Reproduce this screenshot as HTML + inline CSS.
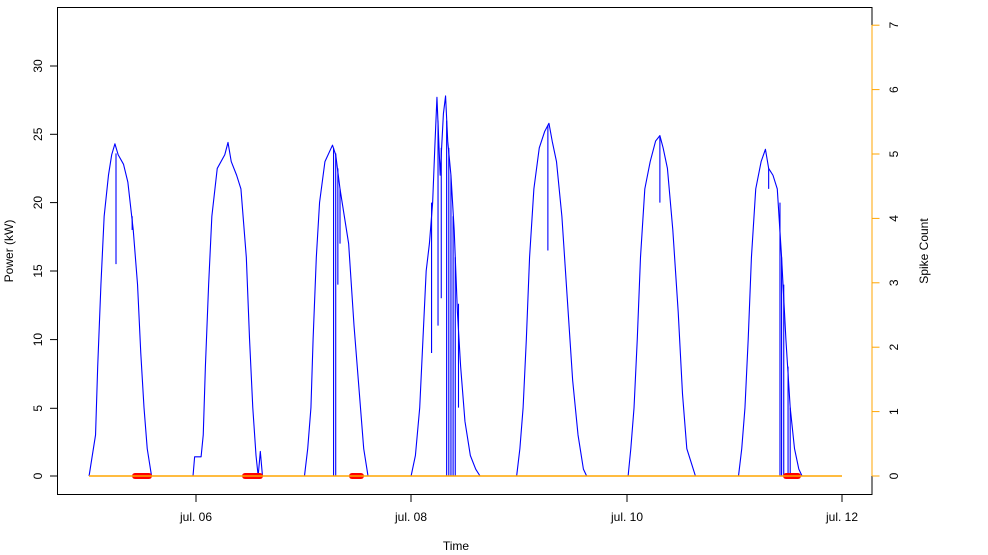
<!DOCTYPE html>
<html><head><meta charset="utf-8"><style>
html,body{margin:0;padding:0;background:#fff;width:988px;height:555px;overflow:hidden}
svg text{font-family:"Liberation Sans",Arial,sans-serif;font-size:12px;fill:#000}
</style></head><body>
<svg width="988" height="555" viewBox="0 0 988 555" xmlns="http://www.w3.org/2000/svg">
<rect x="57.5" y="7.5" width="814.5" height="487" fill="none" stroke="#000" stroke-width="1"/>
<g stroke="#000" stroke-width="1">
<line x1="50" y1="476" x2="57.5" y2="476"/><line x1="50" y1="408.3" x2="57.5" y2="408.3"/>
<line x1="50" y1="339.6" x2="57.5" y2="339.6"/><line x1="50" y1="271" x2="57.5" y2="271"/>
<line x1="50" y1="202.6" x2="57.5" y2="202.6"/><line x1="50" y1="134.3" x2="57.5" y2="134.3"/>
<line x1="50" y1="66" x2="57.5" y2="66"/>
<line x1="196" y1="494.5" x2="196" y2="502"/><line x1="411" y1="494.5" x2="411" y2="502"/>
<line x1="627" y1="494.5" x2="627" y2="502"/><line x1="842" y1="494.5" x2="842" y2="502"/>
</g>
<g text-anchor="middle">
<text transform="translate(42,476) rotate(-90)">0</text>
<text transform="translate(42,408.3) rotate(-90)">5</text>
<text transform="translate(42,339.6) rotate(-90)">10</text>
<text transform="translate(42,271) rotate(-90)">15</text>
<text transform="translate(42,202.6) rotate(-90)">20</text>
<text transform="translate(42,134.3) rotate(-90)">25</text>
<text transform="translate(42,66) rotate(-90)">30</text>
<text transform="translate(13,251) rotate(-90)">Power (kW)</text>
<text x="196" y="521">jul. 06</text><text x="411" y="521">jul. 08</text>
<text x="627" y="521">jul. 10</text><text x="842" y="521">jul. 12</text>
<text x="456" y="550">Time</text>
<text transform="translate(928,251) rotate(-90)">Spike Count</text>
</g>
<g stroke="#FFA500" stroke-width="1">
<line x1="872" y1="25" x2="872" y2="476"/>
<line x1="872" y1="476" x2="879.5" y2="476"/><line x1="872" y1="411.6" x2="879.5" y2="411.6"/>
<line x1="872" y1="347.2" x2="879.5" y2="347.2"/><line x1="872" y1="282.8" x2="879.5" y2="282.8"/>
<line x1="872" y1="218.4" x2="879.5" y2="218.4"/><line x1="872" y1="154" x2="879.5" y2="154"/>
<line x1="872" y1="89.6" x2="879.5" y2="89.6"/><line x1="872" y1="25.2" x2="879.5" y2="25.2"/>
</g>
<g text-anchor="middle">
<text transform="translate(898,476) rotate(-90)">0</text>
<text transform="translate(898,411.6) rotate(-90)">1</text>
<text transform="translate(898,347.2) rotate(-90)">2</text>
<text transform="translate(898,282.8) rotate(-90)">3</text>
<text transform="translate(898,218.4) rotate(-90)">4</text>
<text transform="translate(898,154) rotate(-90)">5</text>
<text transform="translate(898,89.6) rotate(-90)">6</text>
<text transform="translate(898,25.2) rotate(-90)">7</text>
</g>
<g transform="translate(88,476) scale(107.7,-13.67)" fill="none" stroke="#0000FF" stroke-width="1.1" stroke-linejoin="round">
<polyline vector-effect="non-scaling-stroke" points="0.01,0 0.04,1.5 0.07,3 0.09,8 0.12,14 0.15,19 0.19,22 0.22,23.5 0.25,24.3 0.28,23.5 0.33,22.8 0.37,21.5 0.42,18 0.46,14 0.49,9 0.52,5 0.55,2 0.58,0.5 0.59,0"/>
<polyline vector-effect="non-scaling-stroke" points="0.975,0 0.99,1.4 1.05,1.4 1.07,3 1.09,8 1.12,14 1.15,19 1.2,22.5 1.27,23.5 1.30,24.4 1.33,23 1.38,22 1.42,21 1.47,16 1.5,10 1.53,5 1.56,1.5 1.58,0 1.60,1.8 1.62,0"/>
<polyline vector-effect="non-scaling-stroke" points="2.01,0 2.04,2 2.07,5 2.09,10 2.12,16 2.15,20 2.2,23 2.27,24.2 2.3,23.5 2.34,21 2.38,19 2.42,17 2.47,11 2.52,6 2.56,2 2.6,0"/>
<polyline vector-effect="non-scaling-stroke" points="3.0,0 3.04,1.5 3.08,5 3.11,10 3.14,15 3.17,17 3.2,20 3.22,24 3.24,27.7 3.27,22 3.30,26.5 3.32,27.8 3.34,24.5 3.37,22 3.40,18 3.43,12 3.46,8 3.5,4 3.55,1.5 3.6,0.5 3.64,0"/>
<polyline vector-effect="non-scaling-stroke" points="3.98,0 4.01,2 4.04,5 4.07,10 4.1,16 4.14,21 4.19,24 4.24,25.2 4.28,25.8 4.31,24.5 4.35,23 4.4,19 4.45,13 4.5,7 4.55,3 4.6,0.5 4.63,0"/>
<polyline vector-effect="non-scaling-stroke" points="5.015,0 5.04,2 5.07,5 5.1,10 5.13,16 5.17,21 5.22,23 5.27,24.5 5.31,24.9 5.34,24 5.38,22.5 5.43,18 5.48,12 5.52,6 5.56,2 5.6,1 5.64,0"/>
<polyline vector-effect="non-scaling-stroke" points="6.04,0 6.07,2 6.1,5 6.13,10 6.16,16 6.2,21 6.25,23 6.29,23.9 6.32,22.5 6.36,22 6.4,21 6.44,16 6.48,10 6.52,5 6.56,2 6.6,0.5 6.63,0"/>
<path vector-effect="non-scaling-stroke" d="M0.26,23.6V15.5M0.41,19V18M2.28,24V0M2.30,23.6V0M2.32,22.5V14M2.34,21V17M3.19,20V9M3.25,26V11M3.28,24V13M3.33,26V0M3.35,24V0M3.37,22V0M3.39,19V0M3.41,16V0M3.44,12.6V5M4.27,25.6V16.5M5.31,24.9V20M6.32,22.5V21M6.425,20V0M6.44,16V0M6.46,14V0M6.5,8V0M6.52,5V0"/>
</g>
<g stroke="#FF0000" stroke-width="6" stroke-linecap="round">
<line x1="135" y1="476" x2="149" y2="476"/><line x1="245" y1="476" x2="260" y2="476"/>
<line x1="352" y1="476" x2="361" y2="476"/><line x1="786" y1="476" x2="798" y2="476"/>
</g>
<line x1="89" y1="476" x2="842" y2="476" stroke="#FFA500" stroke-width="1.5"/>
</svg>
</body></html>
